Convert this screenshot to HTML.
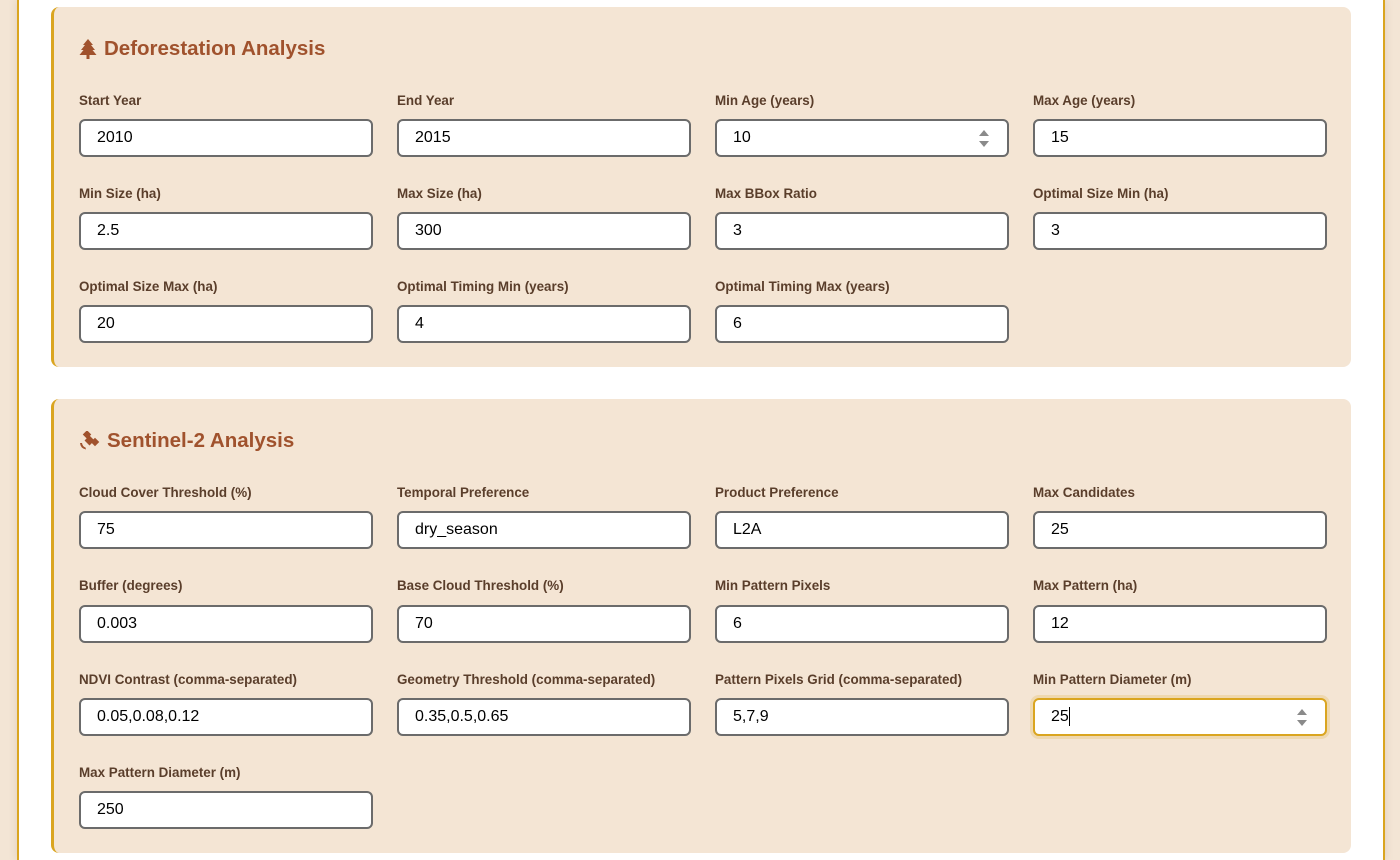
<!DOCTYPE html>
<html><head><meta charset="utf-8"><style>
*{box-sizing:border-box;margin:0;padding:0}
body{width:1400px;height:860px;overflow:hidden;background:#f3e5d5;font-family:"Liberation Sans",sans-serif;position:relative}
.wrap{position:absolute;left:17px;top:0;width:1368px;height:860px;background:#fff;border-left:2px solid #daa520;border-right:2px solid #daa520;box-shadow:0 0 8px rgba(120,80,40,.15)}
.panel{position:absolute;left:51px;width:1300px;background:#f4e5d4;border-left:3px solid #daa520;border-radius:8px}
.title{position:absolute;left:25px;font-size:20.5px;font-weight:bold;color:#a0522d;display:flex;align-items:center;gap:7px}
.lbl{position:absolute;font-size:13.4px;font-weight:bold;color:#5a3e2b;line-height:16px}
.inp{position:absolute;width:294px;height:38px;background:#fff;border:2px solid #6b6b6b;border-radius:6px;font-size:16px;color:#000;padding-left:16px;line-height:34px}
.inp.f{border-color:#daa520;box-shadow:0 0 0 3px rgba(218,165,32,.2)}
.spin{position:absolute;right:18px;top:9px;width:10px;height:17px}
.spin:before{content:"";position:absolute;left:0;top:0;border-left:5px solid transparent;border-right:5px solid transparent;border-bottom:6px solid #8a8a8a}
.spin:after{content:"";position:absolute;left:0;bottom:0;border-left:5px solid transparent;border-right:5px solid transparent;border-top:6px solid #8a8a8a}
</style></head><body>
<div class="wrap"></div>

<div class="panel" style="top:7px;height:360px">
<div class="title" style="top:30px"><svg width="18" height="22" viewBox="0 0 18 22"><path d="M9 1 L4 7 H6 L2 12 H4.5 L0.5 17 H7.5 V21 H10.5 V17 H17.5 L13.5 12 H16 L12 7 H14 Z" fill="#a0522d"/></svg>Deforestation Analysis</div>
</div>

<div class="panel" style="top:399px;height:454px">
<div class="title" style="top:30px"><svg width="21" height="20" viewBox="0 0 21 20"><g fill="#a0522d"><rect x="7" y="6" width="7" height="7" transform="rotate(45 10.5 9.5)"/><rect x="5" y="0.5" width="6" height="6" transform="rotate(45 8 3.5)"/><rect x="13" y="8" width="6" height="6" transform="rotate(45 16 11)"/><path d="M1 12 Q1.5 17.5 7 18.5 L6.5 16.5 Q3.5 15.5 3 12Z"/></g></svg>Sentinel-2 Analysis</div>
</div>

<!-- Panel 1 fields -->
<div class="lbl" style="left:79px;top:93px">Start Year</div>
<div class="lbl" style="left:397px;top:93px">End Year</div>
<div class="lbl" style="left:715px;top:93px">Min Age (years)</div>
<div class="lbl" style="left:1033px;top:93px">Max Age (years)</div>
<div class="inp" style="left:79px;top:119px">2010</div>
<div class="inp" style="left:397px;top:119px">2015</div>
<div class="inp" style="left:715px;top:119px">10<span class="spin"></span></div>
<div class="inp" style="left:1033px;top:119px">15</div>

<div class="lbl" style="left:79px;top:186px">Min Size (ha)</div>
<div class="lbl" style="left:397px;top:186px">Max Size (ha)</div>
<div class="lbl" style="left:715px;top:186px">Max BBox Ratio</div>
<div class="lbl" style="left:1033px;top:186px">Optimal Size Min (ha)</div>
<div class="inp" style="left:79px;top:212px">2.5</div>
<div class="inp" style="left:397px;top:212px">300</div>
<div class="inp" style="left:715px;top:212px">3</div>
<div class="inp" style="left:1033px;top:212px">3</div>

<div class="lbl" style="left:79px;top:279px">Optimal Size Max (ha)</div>
<div class="lbl" style="left:397px;top:279px">Optimal Timing Min (years)</div>
<div class="lbl" style="left:715px;top:279px">Optimal Timing Max (years)</div>
<div class="inp" style="left:79px;top:305px">20</div>
<div class="inp" style="left:397px;top:305px">4</div>
<div class="inp" style="left:715px;top:305px">6</div>

<!-- Panel 2 fields -->
<div class="lbl" style="left:79px;top:485px">Cloud Cover Threshold (%)</div>
<div class="lbl" style="left:397px;top:485px">Temporal Preference</div>
<div class="lbl" style="left:715px;top:485px">Product Preference</div>
<div class="lbl" style="left:1033px;top:485px">Max Candidates</div>
<div class="inp" style="left:79px;top:511px">75</div>
<div class="inp" style="left:397px;top:511px">dry_season</div>
<div class="inp" style="left:715px;top:511px">L2A</div>
<div class="inp" style="left:1033px;top:511px">25</div>

<div class="lbl" style="left:79px;top:578px">Buffer (degrees)</div>
<div class="lbl" style="left:397px;top:578px">Base Cloud Threshold (%)</div>
<div class="lbl" style="left:715px;top:578px">Min Pattern Pixels</div>
<div class="lbl" style="left:1033px;top:578px">Max Pattern (ha)</div>
<div class="inp" style="left:79px;top:605px">0.003</div>
<div class="inp" style="left:397px;top:605px">70</div>
<div class="inp" style="left:715px;top:605px">6</div>
<div class="inp" style="left:1033px;top:605px">12</div>

<div class="lbl" style="left:79px;top:672px">NDVI Contrast (comma-separated)</div>
<div class="lbl" style="left:397px;top:672px">Geometry Threshold (comma-separated)</div>
<div class="lbl" style="left:715px;top:672px">Pattern Pixels Grid (comma-separated)</div>
<div class="lbl" style="left:1033px;top:672px">Min Pattern Diameter (m)</div>
<div class="inp" style="left:79px;top:698px">0.05,0.08,0.12</div>
<div class="inp" style="left:397px;top:698px">0.35,0.5,0.65</div>
<div class="inp" style="left:715px;top:698px">5,7,9</div>
<div class="inp f" style="left:1033px;top:698px">25<span style="display:inline-block;width:1px;height:19px;background:#000;vertical-align:middle"></span><span class="spin"></span></div>

<div class="lbl" style="left:79px;top:765px">Max Pattern Diameter (m)</div>
<div class="inp" style="left:79px;top:791px">250</div>
</body></html>
